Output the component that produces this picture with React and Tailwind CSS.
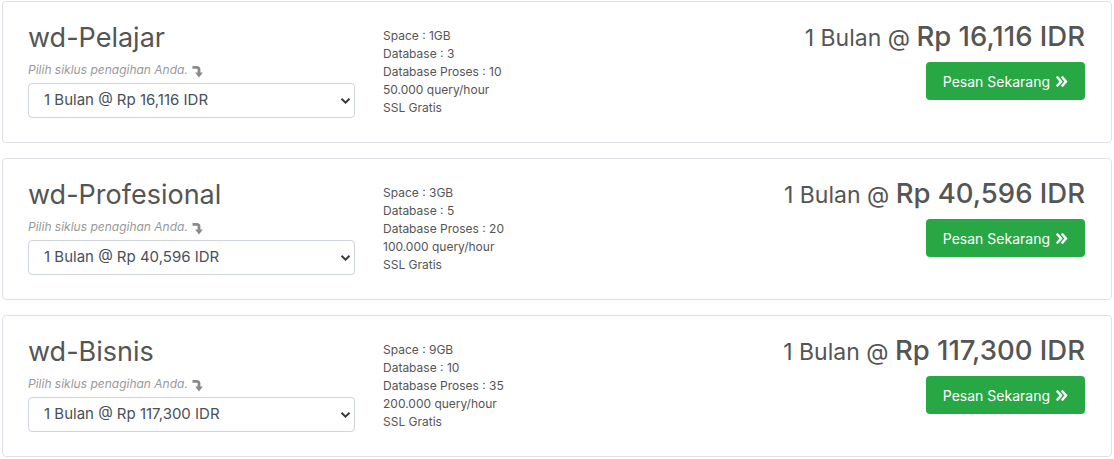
import React from 'react';

const PLANS = [
  { name: 'wd-Pelajar', price: 'Rp 16,116 IDR', space: '1GB', db: 3, proc: 10, query: '50.000' },
  { name: 'wd-Profesional', price: 'Rp 40,596 IDR', space: '3GB', db: 5, proc: 20, query: '100.000' },
  { name: 'wd-Bisnis', price: 'Rp 117,300 IDR', space: '9GB', db: 10, proc: 35, query: '200.000' },
];

function LevelDown() {
  return (
    <svg width="12" height="13" viewBox="0 0 12 13" className="inline-block ml-[4px] -mb-[2px]">
      <path d="M0.5 2.3 H4.8 Q7 2.3 7 4.5 V8" fill="none" stroke="#8a8a8a" strokeWidth="2.8" />
      <path d="M3.2 7.5 L10.8 7.5 L7 12.5 Z" fill="#8a8a8a" />
    </svg>
  );
}

function AnglesRight() {
  return (
    <svg width="12" height="11" viewBox="0 0 12 11">
      <path d="M1.5 1.5 L5 5.5 L1.5 9.5 M6.5 1.5 L10 5.5 L6.5 9.5" fill="none" stroke="white" strokeWidth="2.6" strokeLinecap="round" strokeLinejoin="round" />
    </svg>
  );
}

function PlanCard({ plan }) {
  return (
    <div className="border border-[#dee2e6] rounded-[4px] bg-white pl-[25px] pr-[26px] pt-[19px] pb-[24px] flex">
      {/* left: name + cycle select */}
      <div className="w-[327px] shrink-0">
        <h3 className="text-[27px] leading-[34px] text-[#555555] font-normal">{plan.name}</h3>
        <p className="mt-[6px] h-[18px] text-[12px] leading-[18px] italic text-[#999999] whitespace-nowrap">
          Pilih siklus penagihan Anda.
          <LevelDown />
        </p>
        <div className="relative mt-[4px]">
          <select
            className="appearance-none w-full h-[35px] border border-[#ced4da] rounded-[4px] bg-white pl-[15px] pr-8 text-[15px] text-[#495057] outline-none"
            defaultValue="1"
          >
            <option value="1">1 Bulan @ {plan.price}</option>
          </select>
          <svg width="11" height="8" viewBox="0 0 11 8" className="absolute right-[4px] top-[14px] pointer-events-none">
            <path d="M1.5 1.8 L5.5 5.6 L9.5 1.8" fill="none" stroke="#343a40" strokeWidth="2" />
          </svg>
        </div>
      </div>

      {/* features */}
      <div className="ml-[28px] pt-[6px] text-[12px] leading-[18px] text-[#555555]">
        <div>Space : {plan.space}</div>
        <div>Database : {plan.db}</div>
        <div>Database Proses : {plan.proc}</div>
        <div>{plan.query} query/hour</div>
        <div>SSL Gratis</div>
      </div>

      {/* price + order */}
      <div className="flex-1 flex flex-col items-end">
        <div className="-mt-[2px] h-[34px] text-[#555555] leading-[34px] whitespace-nowrap">
          <span className="text-[23px]">1 Bulan @ </span>
          <span className="text-[27.5px] font-medium">{plan.price}</span>
        </div>
        <button className="mt-[9px] h-[38px] pl-[17px] pr-[17px] rounded-[4px] bg-[#28a745] text-white text-[14px] flex items-center gap-[6px]">
          Pesan Sekarang
          <AnglesRight />
        </button>
      </div>
    </div>
  );
}

export default function App() {
  return (
    <div className="w-[1114px] min-h-[459px] bg-white px-[2px] pt-[1px] flex flex-col gap-[15px] font-['Inter','Liberation_Sans',sans-serif]">
      {PLANS.map((p) => (
        <PlanCard key={p.name} plan={p} />
      ))}
    </div>
  );
}
